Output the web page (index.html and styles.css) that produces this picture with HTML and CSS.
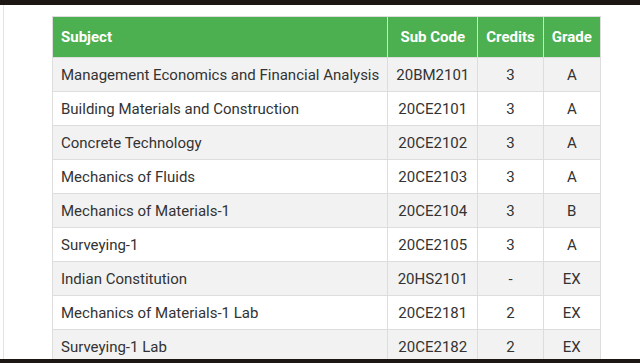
FILE: index.html
```html
<!DOCTYPE html>
<html>
<head>
<meta charset="utf-8">
<link rel="stylesheet" href="styles.css">
</head>
<body>
<div class="topbar"></div>
<main class="main">
  <table class="grades">
    <thead>
      <tr><th class="subj">Subject</th><th>Sub Code</th><th>Credits</th><th>Grade</th></tr>
    </thead>
    <tbody>
      <tr><td class="subj">Management Economics and Financial Analysis</td><td>20BM2101</td><td>3</td><td>A</td></tr>
      <tr><td class="subj">Building Materials and Construction</td><td>20CE2101</td><td>3</td><td>A</td></tr>
      <tr><td class="subj">Concrete Technology</td><td>20CE2102</td><td>3</td><td>A</td></tr>
      <tr><td class="subj">Mechanics of Fluids</td><td>20CE2103</td><td>3</td><td>A</td></tr>
      <tr><td class="subj">Mechanics of Materials-1</td><td>20CE2104</td><td>3</td><td>B</td></tr>
      <tr><td class="subj">Surveying-1</td><td>20CE2105</td><td>3</td><td>A</td></tr>
      <tr><td class="subj">Indian Constitution</td><td>20HS2101</td><td>-</td><td>EX</td></tr>
      <tr><td class="subj">Mechanics of Materials-1 Lab</td><td>20CE2181</td><td>2</td><td>EX</td></tr>
      <tr><td class="subj">Surveying-1 Lab</td><td>20CE2182</td><td>2</td><td>EX</td></tr>
    </tbody>
  </table>
</main>
<div class="bottombar"></div>
</body>
</html>
```

FILE: styles.css
```css
html, body {
  margin: 0;
  padding: 0;
}
body {
  width: 640px;
  height: 363px;
  display: flex;
  flex-direction: column;
  overflow: hidden;
  background: #ffffff;
  font-family: Roboto, "Noto Sans", Arial, sans-serif;
  color: #333333;
}
.topbar {
  height: 5px;
  flex: none;
  background: #1c1614;
}
.bottombar {
  height: 4px;
  flex: none;
  background: #1c1614;
}
.main {
  flex: 1;
  overflow: hidden;
  margin-left: 3px;
  border-left: 1px solid #e4e4e4;
  padding: 11px 0 0 48px;
}
.grades {
  border-collapse: collapse;
  font-size: 15px;
}
.grades th,
.grades td {
  border: 1px solid #dddddd;
  text-align: center;
  padding: 0 8px;
  white-space: nowrap;
}
.grades th {
  background: #4caf50;
  color: #ffffff;
  font-weight: 700;
  height: 40px;
}
.grades td {
  height: 33px;
}
.grades .subj {
  text-align: left;
}
.grades tbody tr:nth-child(odd) td {
  background: #f2f2f2;
}
.grades tbody tr:nth-child(even) td {
  background: #ffffff;
}
```
